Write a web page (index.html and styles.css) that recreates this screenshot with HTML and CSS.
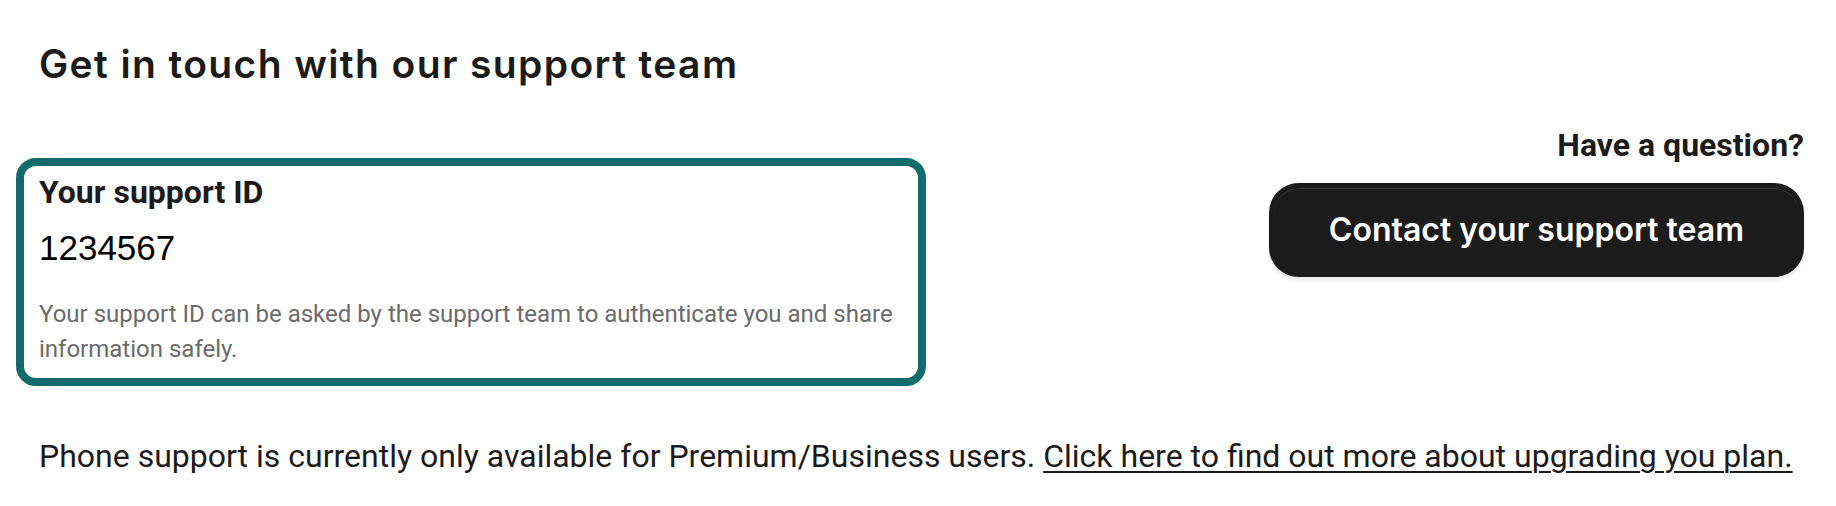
FILE: index.html
```html
<!DOCTYPE html>
<html lang="en">
<head>
<meta charset="utf-8">
<title>Support</title>
<link rel="stylesheet" href="styles.css">
</head>
<body>
<main class="page">
  <h1 class="title">Get in touch with our support team</h1>
  <section class="row">
    <div class="card">
      <h2 class="card-label">Your support ID</h2>
      <div class="card-id">1234567</div>
      <p class="card-note">Your support ID can be asked by the support team to authenticate you and share information safely.</p>
    </div>
    <div class="contact">
      <div class="contact-q">Have a question?</div>
      <button class="contact-btn" type="button">Contact your support team</button>
    </div>
  </section>
  <p class="phone">Phone support is currently only available for Premium/Business users. <a class="phone-link" href="#">Click here to find out more about upgrading you plan.</a></p>
</main>
</body>
</html>
```

FILE: styles.css
```css
html, body {
  margin: 0;
  padding: 0;
  background: #ffffff;
}

.page {
  padding: 42px 32px 0 16px;
  font-family: Roboto, "Noto Sans", sans-serif;
  color: #1b1b1b;
}

.title {
  margin: 0 0 43px 23px;
  font-family: Inter, "Noto Sans", sans-serif;
  font-weight: 600;
  font-size: 39px;
  line-height: 44px;
  letter-spacing: 1.38px;
  color: #1b1b1b;
}

.row {
  display: flex;
  justify-content: space-between;
  align-items: flex-start;
}

.card {
  box-sizing: border-box;
  width: 910px;
  margin-top: 29px;
  border: 8px solid #136b6b;
  border-radius: 20px;
  padding: 8px 16px 11px 15px;
}

.card-label {
  margin: 0;
  font-weight: 700;
  font-size: 32px;
  line-height: 36px;
  color: #1b1b1b;
}

.card-id {
  margin-top: 17px;
  font-family: "Liberation Sans", Arial, sans-serif;
  font-size: 35px;
  line-height: 42px;
  color: #000000;
}

.card-note {
  margin: 28px 0 0 0;
  font-size: 24px;
  line-height: 35px;
  color: #6b6b6b;
}

.contact {
  display: flex;
  flex-direction: column;
  align-items: flex-end;
}

.contact-q {
  font-weight: 700;
  font-size: 32px;
  line-height: 33px;
  color: #1b1b1b;
}

.contact-btn {
  margin-top: 21px;
  padding: 24px 55px;
  border: 5px solid #1b1b1b;
  border-radius: 30px;
  background: #1b1b1b;
  color: #ffffff;
  font-family: Inter, "Noto Sans", sans-serif;
  font-weight: 600;
  font-size: 32px;
  line-height: 36px;
  box-shadow: inset 0 1px 0 rgba(255, 255, 255, 0.14), 0 4px 3px rgba(0, 0, 0, 0.07);
  cursor: pointer;
}

.phone {
  margin: 52px 0 0 23px;
  font-size: 32px;
  line-height: 36px;
  color: #1b1b1b;
}

.phone-link {
  color: #1b1b1b;
  text-decoration: underline;
  text-decoration-thickness: 2px;
  text-underline-offset: 4px;
}
```
